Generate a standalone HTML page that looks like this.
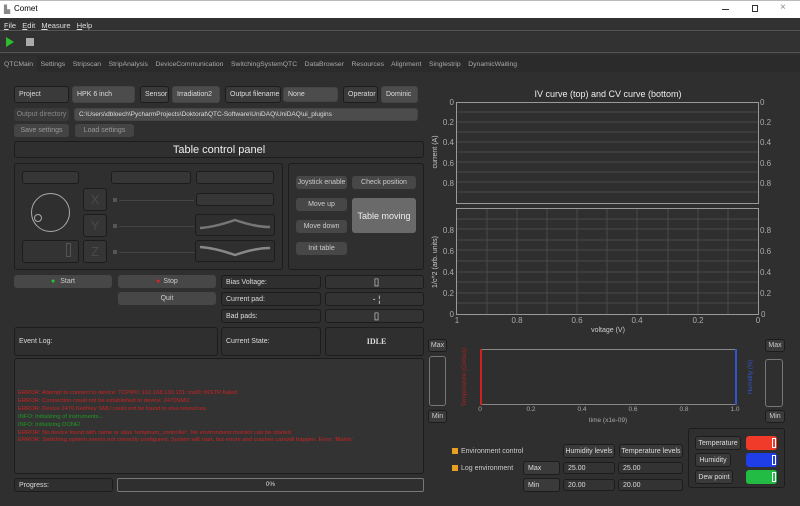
<!DOCTYPE html>
<html><head><meta charset="utf-8"><style>
*{box-sizing:border-box;margin:0;padding:0}
body{width:800px;height:506px;overflow:hidden;background:#2f2f2f;font-family:"Liberation Sans",sans-serif;font-size:7px;color:#ddd;position:relative}
.a{position:absolute}
.b{position:absolute;border:1px solid #1c1c1c;border-radius:3px;background:#3a3a3a;display:flex;align-items:center;padding-left:4px;font-size:7px;color:#ddd}
.f{background:#4c4c4c;border-color:#444}
.btn{position:absolute;background:#474747;border-radius:3px;display:flex;align-items:center;justify-content:center;font-size:7px;color:#ccc}
.dis{color:#666;background:#3a3a3a}
.box{position:absolute;border:1px solid #1c1c1c;border-radius:3px}
</style></head><body>
<div class="a" style="left:0;top:0;width:800px;height:18px;background:#fff;border-top:1px solid #bbb"></div>
<div class="a" style="left:4px;top:5px;font-size:8px;color:#888">▙</div>
<div class="a" style="left:14px;top:4px;font-size:8px;color:#000">Comet</div>
<div class="a" style="left:722px;top:9px;width:7px;height:1px;background:#333"></div>
<div class="a" style="left:752px;top:5px;width:6px;height:7px;border:1px solid #333"></div>
<div class="a" style="left:780px;top:2px;font-size:10px;color:#888">×</div>
<div class="a" style="left:0;top:18px;width:800px;height:13px;background:#323232;border-bottom:1px solid #555"></div>
<div class="a" style="left:4px;top:21px;font-size:7.5px;color:#ddd;word-spacing:1px"><u>F</u>ile &nbsp;<u>E</u>dit &nbsp;<u>M</u>easure &nbsp;<u>H</u>elp</div>
<div class="a" style="left:0;top:32px;width:800px;height:21px;background:#323232;border-bottom:1px solid #555"></div>
<svg class="a" style="left:5px;top:37px" width="10" height="10"><path d="M1 0 L9 5 L1 10Z" fill="#2ebd2e"/></svg>
<div class="a" style="left:26px;top:38px;width:8px;height:8px;background:#aaa"></div>
<div class="a" style="left:0;top:55px;width:800px;height:17px;background:#2b2b2b"></div>
<div class="a" style="left:0;top:56px;width:37px;height:16px;background:#2f2f2f"></div>
<div class="a" style="left:4px;top:61px;font-size:6.8px;color:#aaa;white-space:pre">QTCMain    Settings    Stripscan    StripAnalysis    DeviceCommunication    SwitchingSystemQTC    DataBrowser    Resources    Alignment    Singlestrip    DynamicWaiting</div>

<div class="b" style="left:14px;top:86px;width:55px;height:17px">Project</div>
<div class="b f" style="left:72px;top:86px;width:63px;height:17px">HPK 6 inch</div>
<div class="b" style="left:140px;top:86px;width:29px;height:17px">Sensor</div>
<div class="b f" style="left:172px;top:86px;width:48px;height:17px">Irradiation2</div>
<div class="b" style="left:225px;top:86px;width:56px;height:17px">Output filename</div>
<div class="b f" style="left:283px;top:87px;width:55px;height:15px">None</div>
<div class="b" style="left:343px;top:86px;width:35px;height:17px">Operator</div>
<div class="b f" style="left:381px;top:86px;width:37px;height:17px">Dominic</div>
<div class="btn dis" style="left:14px;top:108px;width:55px;height:13px;color:#888">Output directory</div>
<div class="b f" style="left:74px;top:108px;width:344px;height:13px;font-size:6.5px">C:\Users\dbloech\PycharmProjects\Doktorat\QTC-Software\UniDAQ\UniDAQ\ui_plugins</div>
<div class="btn dis" style="left:14px;top:124px;width:55px;height:13px;color:#999;background:#444">Save settings</div>
<div class="btn dis" style="left:75px;top:124px;width:59px;height:13px;color:#999;background:#444">Load settings</div>

<div class="box" style="left:14px;top:141px;width:410px;height:17px;display:flex;align-items:center;justify-content:center;font-size:11px;color:#eee">Table control panel</div>
<div class="box" style="left:14px;top:163px;width:269px;height:107px"></div>
<div class="box" style="left:288px;top:163px;width:136px;height:107px"></div>
<div class="box" style="left:22px;top:171px;width:57px;height:13px;background:#363636"></div>
<div class="box" style="left:111px;top:171px;width:80px;height:13px;background:#363636"></div>
<div class="box" style="left:196px;top:171px;width:78px;height:13px;background:#363636"></div>
<div class="box" style="left:196px;top:193px;width:78px;height:13px;background:#363636"></div>
<div class="a" style="left:31px;top:193px;width:39px;height:39px;border:1px solid #aaa;border-radius:50%"></div>
<div class="a" style="left:34px;top:214px;width:8px;height:8px;border:1px solid #aaa;border-radius:50%"></div>
<div class="box" style="left:83px;top:188px;width:24px;height:23px;background:#353535;color:#4a4a4a;font-size:13px;display:flex;align-items:center;justify-content:center">X</div>
<div class="box" style="left:83px;top:214px;width:24px;height:23px;background:#353535;color:#4a4a4a;font-size:13px;display:flex;align-items:center;justify-content:center">Y</div>
<div class="box" style="left:83px;top:240px;width:24px;height:23px;background:#353535;color:#4a4a4a;font-size:13px;display:flex;align-items:center;justify-content:center">Z</div>
<div class="box" style="left:22px;top:240px;width:57px;height:23px;background:#333"></div>
<div class="a" style="left:66px;top:243px;width:5px;height:14px;border:1px solid #555"></div>
<div class="a" style="left:113px;top:198px;width:4px;height:4px;background:#555"></div><div class="a" style="left:119px;top:200px;width:75px;height:1px;background:#444"></div>
<div class="a" style="left:113px;top:224px;width:4px;height:4px;background:#555"></div><div class="a" style="left:119px;top:226px;width:75px;height:1px;background:#444"></div>
<div class="a" style="left:113px;top:250px;width:4px;height:4px;background:#555"></div><div class="a" style="left:119px;top:252px;width:75px;height:1px;background:#444"></div>
<div class="box" style="left:195px;top:214px;width:80px;height:22px"></div>
<div class="box" style="left:195px;top:240px;width:80px;height:22px"></div>
<svg class="a" style="left:195px;top:214px" width="80" height="48"><path d="M5 14 Q20 13 40 6 Q60 13 75 13" stroke="#777" stroke-width="2.5" fill="none"/><path d="M5 33 Q20 34 40 41 Q60 34 75 34" stroke="#888" stroke-width="2.5" fill="none"/></svg>
<div class="btn" style="left:296px;top:176px;width:51px;height:13px">Joystick enable</div>
<div class="btn" style="left:352px;top:176px;width:64px;height:13px">Check position</div>
<div class="btn" style="left:296px;top:198px;width:51px;height:13px">Move up</div>
<div class="btn" style="left:296px;top:220px;width:51px;height:13px">Move down</div>
<div class="btn" style="left:296px;top:242px;width:51px;height:13px">Init table</div>
<div class="btn" style="left:352px;top:198px;width:64px;height:35px;background:#6a6a6a;color:#eee;font-size:9px">Table moving</div>

<div class="btn" style="left:14px;top:275px;width:98px;height:13px"><span style="color:#2c2;margin-right:5px">●</span>Start</div>
<div class="btn" style="left:118px;top:275px;width:98px;height:13px"><span style="color:#d22;margin-right:3px">●</span>Stop</div>
<div class="btn" style="left:118px;top:292px;width:98px;height:13px">Quit</div>
<div class="b" style="left:221px;top:275px;width:100px;height:14px;background:#2f2f2f">Bias Voltage:</div>
<div class="b" style="left:221px;top:292px;width:100px;height:14px;background:#2f2f2f">Current pad:</div>
<div class="b" style="left:221px;top:309px;width:100px;height:14px;background:#2f2f2f">Bad pads:</div>
<div class="b" style="left:325px;top:275px;width:99px;height:14px;justify-content:center;background:#333;font-size:10px">▯</div>
<div class="b" style="left:325px;top:292px;width:99px;height:14px;justify-content:center;background:#333;font-size:9px">- ¦</div>
<div class="b" style="left:325px;top:309px;width:99px;height:14px;justify-content:center;background:#333;font-size:10px">▯</div>
<div class="b" style="left:14px;top:327px;width:204px;height:29px;background:#2f2f2f">Event Log:</div>
<div class="b" style="left:221px;top:327px;width:100px;height:29px;background:#2f2f2f">Current State:</div>
<div class="b" style="left:325px;top:327px;width:99px;height:29px;justify-content:center;background:#2f2f2f;font-family:'Liberation Serif',serif;font-weight:bold;font-size:8px">IDLE</div>
<div class="box" style="left:14px;top:358px;width:410px;height:116px;background:#333"></div>
<div class="a" style="left:18px;top:390px;font-size:5.8px;line-height:7.9px;color:#c22">
ERROR: Attempt to connect to device: TCPIP0::192.168.130.131::inst0::INSTR failed.<br>
ERROR: Connection could not be established to device: 2470SMU<br>
ERROR: Device 2470 Keithley SMU could not be found in visa resources.<br>
<span style="color:#292">INFO: Initializing of instruments...</span><br>
<span style="color:#292">INFO: Initializing DONE!</span><br>
ERROR: No device found with name or alias 'temphum_controller'. No environment monitor can be started.<br>
ERROR: Switching system seems not correctly configured. System will start, but errors and crashes can/will happen. Error: 'Matrix'</div>
<div class="b" style="left:14px;top:478px;width:99px;height:14px;background:#2f2f2f">Progress:</div>
<div class="a" style="left:117px;top:478px;width:307px;height:14px;border:1px solid #777;border-radius:2px;text-align:center;line-height:12px;font-size:6.5px">0%</div>

<svg class="a" style="left:420px;top:80px" width="380" height="350" font-family="Liberation Sans" font-size="8" fill="#aaa">
<text x="188" y="17" text-anchor="middle" font-size="9" fill="#eee">IV curve (top) and CV curve (bottom)</text>
<g stroke="#4a4a4a" stroke-width="1">
<path d="M37 32H338M37 42H338M37 52H338M37 62H338M37 72H338M37 82H338M37 92H338M37 102H338M37 112H338"/>
<path d="M37 139H338M37 149H338M37 160H338M37 170H338M37 181H338M37 192H338M37 202H338M37 213H338M37 223H338"/>
<path d="M67 128V234M97 128V234M127 128V234M157 128V234M187 128V234M217 128V234M248 128V234M278 128V234M308 128V234"/>
</g>
<rect x="36.5" y="22.5" width="302" height="101" fill="none" stroke="#999"/>
<rect x="36.5" y="128.5" width="302" height="106" fill="none" stroke="#999"/>
<g text-anchor="end"><text x="34" y="25">0</text><text x="34" y="45">0.2</text><text x="34" y="65">0.4</text><text x="34" y="86">0.6</text><text x="34" y="106">0.8</text>
<text x="34" y="153">0.8</text><text x="34" y="174">0.6</text><text x="34" y="195">0.4</text><text x="34" y="216">0.2</text><text x="34" y="237">0</text></g>
<g><text x="340" y="25">0</text><text x="340" y="45">0.2</text><text x="340" y="65">0.4</text><text x="340" y="86">0.6</text><text x="340" y="106">0.8</text>
<text x="340" y="153">0.8</text><text x="340" y="174">0.6</text><text x="340" y="195">0.4</text><text x="340" y="216">0.2</text><text x="341" y="237">0</text></g>
<g text-anchor="middle"><text x="37" y="243">1</text><text x="97" y="243">0.8</text><text x="157" y="243">0.6</text><text x="217" y="243">0.4</text><text x="278" y="243">0.2</text><text x="338" y="243">0</text>
<text x="188" y="252" font-size="7" fill="#ccc">voltage (V)</text></g>
<text transform="translate(17,72) rotate(-90)" text-anchor="middle" font-size="7" fill="#ccc">current (A)</text>
<text transform="translate(17,182) rotate(-90)" text-anchor="middle" font-size="7" fill="#ccc">1/c^2 (arb. units)</text>
<rect x="60.5" y="269.5" width="256" height="55" fill="none" stroke="#888"/>
<rect x="60" y="269" width="2" height="56" fill="#c22"/><rect x="315" y="269" width="2" height="56" fill="#3355cc"/>
<g text-anchor="middle" font-size="6.5"><text x="60" y="331">0</text><text x="111" y="331">0.2</text><text x="162" y="331">0.4</text><text x="213" y="331">0.6</text><text x="264" y="331">0.8</text><text x="315" y="331">1.0</text>
<text x="188" y="342" fill="#aaa">time (x1e-09)</text></g>
<text transform="translate(46,297) rotate(-90)" text-anchor="middle" font-size="6" fill="#a22">Temperature (Celsius)</text>
<text transform="translate(332,297) rotate(-90)" text-anchor="middle" font-size="6" fill="#3355cc">Humidity (%)</text>
</svg>
<div class="btn" style="left:428px;top:339px;width:19px;height:13px;background:#3a3a3a;border:1px solid #1c1c1c">Max</div>
<div class="box" style="left:429px;top:356px;width:17px;height:50px;border-color:#777"></div>
<div class="btn" style="left:428px;top:410px;width:19px;height:13px;background:#3a3a3a;border:1px solid #1c1c1c">Min</div>
<div class="btn" style="left:765px;top:339px;width:20px;height:13px;background:#3a3a3a;border:1px solid #1c1c1c">Max</div>
<div class="box" style="left:765px;top:359px;width:18px;height:48px;border-color:#777"></div>
<div class="btn" style="left:765px;top:410px;width:20px;height:13px;background:#3a3a3a;border:1px solid #1c1c1c">Min</div>

<div class="a" style="left:452px;top:448px;width:6px;height:6px;background:#e8a020"></div>
<div class="a" style="left:461px;top:448px;color:#ccc">Environment control</div>
<div class="a" style="left:452px;top:465px;width:6px;height:6px;background:#e8a020"></div>
<div class="a" style="left:461px;top:465px;color:#ccc">Log environment</div>
<div class="b" style="left:563px;top:444px;width:52px;height:14px;justify-content:center;padding:0">Humidity levels</div>
<div class="b" style="left:619px;top:444px;width:64px;height:14px;justify-content:center;padding:0">Temperature levels</div>
<div class="b" style="left:523px;top:461px;width:37px;height:14px">Max</div>
<div class="b" style="left:523px;top:478px;width:37px;height:14px">Min</div>
<div class="b" style="left:563px;top:462px;width:52px;height:12px;background:#333">25.00</div>
<div class="b" style="left:618px;top:462px;width:65px;height:12px;background:#333">25.00</div>
<div class="b" style="left:563px;top:479px;width:52px;height:12px;background:#333">20.00</div>
<div class="b" style="left:618px;top:479px;width:65px;height:12px;background:#333">20.00</div>
<div class="box" style="left:688px;top:428px;width:97px;height:60px"></div>
<div class="b" style="left:695px;top:436px;width:46px;height:14px;justify-content:center;padding:0">Temperature</div>
<div class="b" style="left:695px;top:453px;width:36px;height:14px;justify-content:center;padding:0">Humidity</div>
<div class="b" style="left:695px;top:470px;width:38px;height:14px;justify-content:center;padding:0">Dew point</div>
<div class="a" style="left:746px;top:436px;width:31px;height:14px;background:#f03a2a;border-radius:3px"></div>
<div class="a" style="left:746px;top:453px;width:31px;height:14px;background:#1f3ee8;border-radius:3px"></div>
<div class="a" style="left:746px;top:470px;width:31px;height:14px;background:#22bb44;border-radius:3px"></div>
<div class="a" style="left:772px;top:438px;width:4px;height:10px;border:1px solid #fff"></div>
<div class="a" style="left:772px;top:455px;width:4px;height:10px;border:1px solid #fff"></div>
<div class="a" style="left:772px;top:472px;width:4px;height:10px;border:1px solid #fff"></div>
</body></html>
